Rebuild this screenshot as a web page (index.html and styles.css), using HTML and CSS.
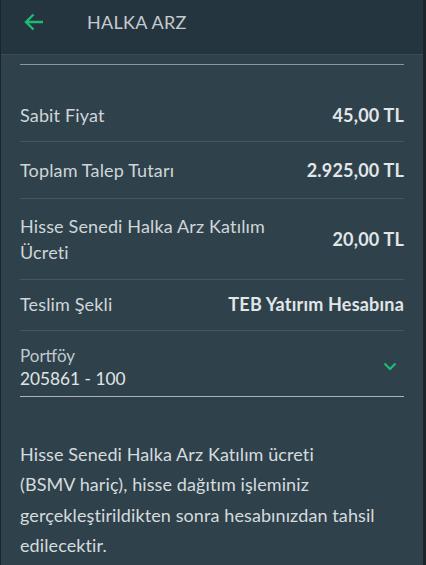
FILE: index.html
```html
<!DOCTYPE html>
<html lang="tr">
<head>
<meta charset="utf-8">
<link rel="stylesheet" href="styles.css">
</head>
<body>
<div class="screen">
  <header class="topbar">
    <svg class="back" width="20" height="18" viewBox="0 0 20 18"><path d="M19 9H2M9.5 1.5L2 9l7.5 7.5" fill="none" stroke="#1dbb74" stroke-width="2.4"/></svg>
    <span class="title">HALKA ARZ</span>
  </header>
  <main class="content">
    <div class="toprule"></div>
    <div class="row r1"><span class="lbl">Sabit Fiyat</span><span class="val">45,00 TL</span></div>
    <div class="row r2"><span class="lbl">Toplam Talep Tutarı</span><span class="val">2.925,00 TL</span></div>
    <div class="row r3"><span class="lbl wrap">Hisse Senedi Halka Arz Katılım Ücreti</span><span class="val">20,00 TL</span></div>
    <div class="row r4"><span class="lbl">Teslim Şekli</span><span class="val">TEB Yatırım Hesabına</span></div>
    <div class="select">
      <div class="sel-text">
        <span class="sel-lbl">Portföy</span>
        <span class="sel-val">205861 - 100</span>
      </div>
      <svg class="chev" width="14" height="9" viewBox="0 0 14 9"><path d="M1.5 1.5L7 7l5.5-5.5" fill="none" stroke="#1dbb74" stroke-width="2.2"/></svg>
    </div>
    <p class="note">Hisse Senedi Halka Arz Katılım ücreti<br>(BSMV hariç), hisse dağıtım işleminiz<br>gerçekleştirildikten sonra hesabınızdan tahsil<br>edilecektir.</p>
  </main>
</div>
</body>
</html>
```
FILE: styles.css
```css
html, body { margin: 0; padding: 0; }
body { background: #1b2429; font-family: "Lato", "Open Sans", sans-serif; }
.screen {
  width: 422px; height: 565px; margin-left: 1px;
  background: #2f424c; overflow: hidden;
}
.topbar {
  height: 54px; background: #253540;
  display: flex; align-items: center;
  border-bottom: 1px solid #3a4d57;
}
.back { margin-left: 23px; margin-top: -10px; }
.title { margin-left: 43px; margin-top: -10px; color: #c5cbcf; font-size: 18px; letter-spacing: 0.3px; }
.content { padding: 0 19px 0 19px; }
.toprule { height: 1px; background: #8a989f; margin-top: 9px; }
.row {
  display: flex; justify-content: space-between; align-items: center;
  border-bottom: 1px solid #46585f;
  font-size: 18px;
  box-sizing: border-box;
}
.r1 { height: 77px; align-items: flex-end; padding-bottom: 15px; }
.r2 { height: 57px; }
.r3 { height: 81px; }
.r4 { height: 51px; padding-bottom: 3px; }
.lbl { color: #d0d6d8; letter-spacing: 0.15px; }
.wrap { max-width: 260px; line-height: 26px; }
.val { color: #e2e6e8; font-weight: 700; font-size: 18px; letter-spacing: 0.2px; }
.select {
  display: flex; justify-content: space-between; align-items: center;
  border-bottom: 1px solid #a9b3b8;
  padding-top: 15px; padding-bottom: 5px;
}
.sel-text { display: flex; flex-direction: column; }
.sel-lbl { color: #c2c9cc; font-size: 17px; line-height: 20px; }
.sel-val { color: #e1e5e7; font-size: 17.3px; line-height: 25px; }
.chev { margin-right: 7px; margin-top: -4px; }
.note {
  margin: 42px 0 0; color: #d6dbdd; font-size: 18px; line-height: 30.4px;
  letter-spacing: 0.1px;
}
```
